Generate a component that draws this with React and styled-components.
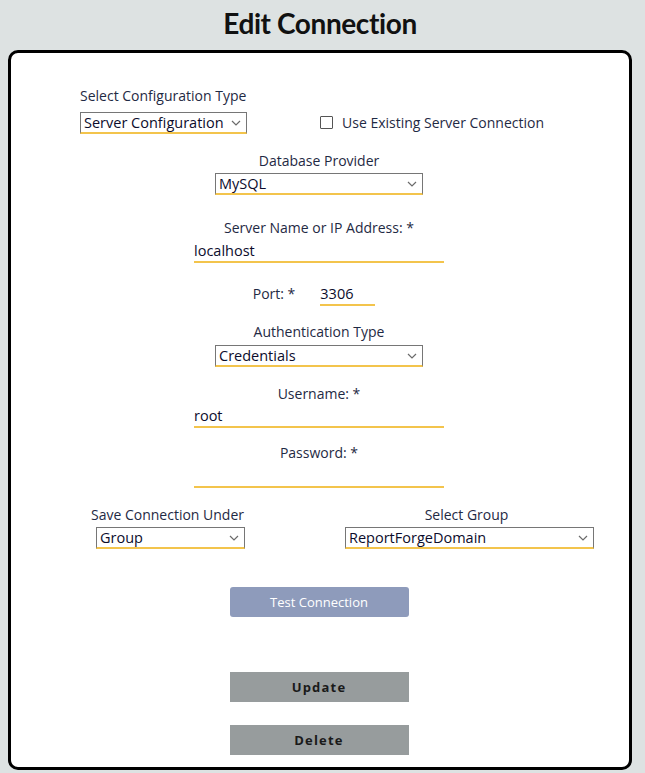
import React from 'react';
import styled, { createGlobalStyle } from 'styled-components';

const GlobalStyle = createGlobalStyle`
  html, body {
    margin: 0;
    padding: 0;
    background: #dde2e2;
  }
  body {
    font-family: "Open Sans", "DejaVu Sans", sans-serif;
    color: #1f2a44;
  }
`;

const Page = styled.div`
  width: 645px;
  min-height: 773px;
  padding: 6px 13px 3px 8px;
  box-sizing: border-box;
  display: flex;
  flex-direction: column;
  align-items: center;
`;

const Title = styled.h1`
  margin: 0 0 9px 0;
  font-family: Lato, "Open Sans", sans-serif;
  font-size: 28px;
  font-weight: 700;
  color: #111;
  line-height: 35px;
  letter-spacing: -0.4px;
`;

const Card = styled.div`
  width: 100%;
  box-sizing: border-box;
  background: #fff;
  border: 3px solid #000;
  border-radius: 10px;
  padding: 34px 2px 12px 0;
  display: flex;
  flex-direction: column;
  align-items: center;
`;

const TopRow = styled.div`
  align-self: stretch;
  display: flex;
  align-items: flex-end;
  padding-left: 69px;
`;

const TopGroup = styled.div`
  width: 240px;
  display: flex;
  flex-direction: column;
  align-items: flex-start;
`;

const Field = styled.div`
  display: flex;
  flex-direction: column;
  align-items: center;
  margin-top: ${(p) => p.$mt || 0}px;
`;

const Label = styled.div`
  font-size: 14px;
  line-height: 18px;
  color: #1f2a44;
  margin-bottom: ${(p) => (p.$mb !== undefined ? p.$mb : 5)}px;
`;

const SelectBox = styled.div`
  width: ${(p) => p.$w}px;
  height: 22px;
  margin-left: ${(p) => p.$shift || 0}px;
  box-sizing: border-box;
  border: 1px solid #767676;
  border-bottom: 2px solid #f3c44c;
  display: flex;
  align-items: center;
  justify-content: space-between;
  padding: 0 5px 0 3px;
  font-size: 14.5px;
  color: #0c0c2c;
  background: #fff;
`;

const Chevron = () => (
  <svg width="10" height="6" viewBox="0 0 10 6" fill="none">
    <path d="M1 1l4 4 4-4" stroke="#6b6b6b" strokeWidth="1.2" />
  </svg>
);

const Select = ({ w, shift, children }) => (
  <SelectBox $w={w} $shift={shift}>
    <span>{children}</span>
    <Chevron />
  </SelectBox>
);

const TextInput = styled.div`
  width: ${(p) => p.$w}px;
  height: 22px;
  box-sizing: border-box;
  border-bottom: 2px solid #f3c44c;
  font-size: 14.5px;
  line-height: 20px;
  color: #0c0c2c;
  text-align: left;
`;

const CheckRow = styled.label`
  display: flex;
  align-items: center;
  gap: 9px;
  font-size: 14px;
  color: #1f2a44;
  height: 22px;
  margin-bottom: 1px;
`;

const CheckBox = styled.span`
  width: 11px;
  height: 11px;
  border: 1px solid #555;
  border-radius: 1px;
  background: #fff;
`;

const PortRow = styled.div`
  display: flex;
  align-items: flex-end;
  gap: 25px;
  margin-top: 21px;
  margin-left: -10px;
`;

const PortLabel = styled.span`
  font-size: 14px;
  line-height: 18px;
  padding-bottom: 3px;
`;

const BottomRow = styled.div`
  align-self: stretch;
  display: grid;
  grid-template-columns: 1fr 1fr;
  margin-top: 18px;
  padding: 0 11px 0 7px;
`;

const TestButton = styled.button`
  margin-top: 38px;
  width: 179px;
  height: 30px;
  border: none;
  border-radius: 3px;
  background: #8e9bbb;
  color: #fff;
  font-family: inherit;
  font-size: 13px;
`;

const ActionButton = styled.button`
  margin-top: ${(p) => p.$mt}px;
  width: 179px;
  height: 30px;
  border: none;
  background: #979c9d;
  color: #1a1a1a;
  font-family: inherit;
  font-size: 13px;
  font-weight: 700;
  letter-spacing: 1.2px;
`;

export default function App() {
  return (
    <>
      <GlobalStyle />
      <Page>
        <Title>Edit Connection</Title>
        <Card>
          <TopRow>
            <TopGroup>
              <Label $mb={7}>Select Configuration Type</Label>
              <Select w={167}>Server Configuration</Select>
            </TopGroup>
            <CheckRow>
              <CheckBox />
              Use Existing Server Connection
            </CheckRow>
          </TopRow>

          <Field $mt={18}>
            <Label $mb={3}>Database Provider</Label>
            <Select w={208}>MySQL</Select>
          </Field>

          <Field $mt={24}>
            <Label $mb={4}>Server Name or IP Address: *</Label>
            <TextInput $w={250}>localhost</TextInput>
          </Field>

          <PortRow>
            <PortLabel>Port: *</PortLabel>
            <TextInput $w={55}>3306</TextInput>
          </PortRow>

          <Field $mt={17}>
            <Label $mb={4}>Authentication Type</Label>
            <Select w={208}>Credentials</Select>
          </Field>

          <Field $mt={18}>
            <Label $mb={3}>Username: *</Label>
            <TextInput $w={250}>root</TextInput>
          </Field>

          <Field $mt={16}>
            <Label $mb={4}>Password: *</Label>
            <TextInput $w={250} />
          </Field>

          <BottomRow>
            <Field>
              <Label $mb={3}>Save Connection Under</Label>
              <Select w={149} shift={6}>Group</Select>
            </Field>
            <Field>
              <Label $mb={3}>Select Group</Label>
              <Select w={249} shift={6}>ReportForgeDomain</Select>
            </Field>
          </BottomRow>

          <TestButton>Test Connection</TestButton>
          <ActionButton $mt={55}>Update</ActionButton>
          <ActionButton $mt={23}>Delete</ActionButton>
        </Card>
      </Page>
    </>
  );
}
